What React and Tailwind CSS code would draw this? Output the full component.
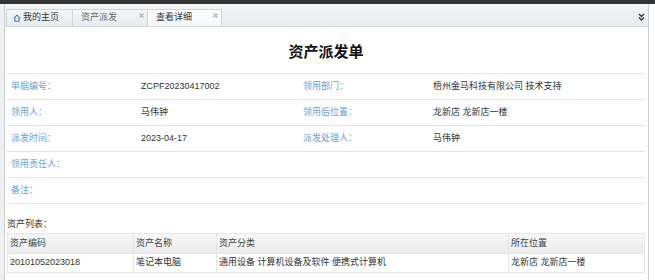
import React from 'react';

const FONT = { fontFamily: '"Liberation Sans", "Noto Sans CJK SC", sans-serif' };

const fields = [
  ['单据编号：', 'ZCPF20230417002', '领用部门：', '梧州金马科技有限公司 技术支持'],
  ['领用人：', '马伟钟', '领用后位置：', '龙新店 龙新店一楼'],
  ['派发时间：', '2023-04-17', '派发处理人：', '马伟钟'],
  ['领用责任人：', '', '', ''],
  ['备注：', '', '', ''],
];

const HomeIcon = () => (
  <svg width="8" height="8" viewBox="0 0 8 8" className="shrink-0">
    <path d="M0.8 4.2 L4 1.2 L7.2 4.2" fill="none" stroke="#3b7fc4" strokeWidth="1.1" />
    <path d="M1.9 3.6 V7.2 H6.1 V3.6" fill="none" stroke="#3b7fc4" strokeWidth="1.1" />
  </svg>
);

const CloseX = () => (
  <svg width="5" height="5" viewBox="0 0 5 5" className="shrink-0">
    <path d="M0.5 0.5 L4.5 4.5 M4.5 0.5 L0.5 4.5" stroke="#a8b4bc" strokeWidth="1.1" />
  </svg>
);

const Tab = ({ label, icon, closable, active }) => (
  <div
    className={`relative flex h-full items-center border-r border-[#cdd6dc] pl-[6px] ${
      active ? 'bg-gradient-to-b from-[#ffffff] to-[#f3f6f8]' : 'bg-gradient-to-b from-[#f4f7f8] to-[#e6ebee]'
    }`}
  >
    {icon}
    <span className={`ml-[2px] text-[9px] ${active || icon ? 'text-[#333]' : 'text-[#666]'}`}>{label}</span>
    {closable && (
      <span className="absolute right-[3px] top-[3px]">
        <CloseX />
      </span>
    )}
  </div>
);

export default function App() {
  return (
    <div className="w-[655px] h-[280px] overflow-hidden bg-white flex flex-col" style={FONT}>
      <div className="h-[4px] bg-[#333] shrink-0" />
      <div className="flex flex-1 min-h-0">
        <div className="w-[5px] bg-[#eef0f2] border-r border-[#c9d1d6]" />
        <div className="flex-1 flex flex-col border-r border-[#c5d0d7]">
          {/* tab bar */}
          <div className="h-[23px] shrink-0 bg-gradient-to-b from-[#f2f5f6] to-[#e7ecee] border-b border-[#d3dbe0] flex items-end pl-[1px] relative">
            <div className="flex h-[17px] border-t border-l border-[#cdd6dc]">
              <div className="w-[66px] h-full">
                <Tab label="我的主页" icon={<HomeIcon />} />
              </div>
              <div className="w-[75px] h-full">
                <Tab label="资产派发" closable />
              </div>
              <div className="w-[74px] h-full">
                <Tab label="查看详细" closable active />
              </div>
            </div>
            <svg width="7" height="8" viewBox="0 0 7 8" className="absolute right-[3px] top-[9px]">
              <path d="M1 1 L3.5 3.5 L6 1 M1 4.5 L3.5 7 L6 4.5" fill="none" stroke="#333" strokeWidth="1.3" />
            </svg>
          </div>

          {/* body */}
          <div className="pl-[2px] pr-[3px] flex flex-col">
            <div className="h-[46px] flex items-center justify-center pt-[5px]">
              <h1 className="text-[15px] font-bold text-[#111]">资产派发单</h1>
            </div>
            <div className="border-t border-[#e3e8eb]">
              {fields.map((r, i) => (
                <div
                  key={i}
                  className="h-[26px] border-b border-[#e3e8eb] grid grid-cols-[130px_162px_130px_1fr] items-center pl-[4px] text-[9px]"
                >
                  <span className="text-[#6aa0d8]">{r[0]}</span>
                  <span className="text-[#333]">{r[1]}</span>
                  <span className="text-[#6aa0d8]">{r[2]}</span>
                  <span className="text-[#333]">{r[3]}</span>
                </div>
              ))}
            </div>
            <div className="h-[29px] flex items-center text-[9px] text-[#333] pt-[12px]">资产列表：</div>
            <div className="border border-[#e6e6e6] text-[9px] text-[#333]">
              <div className="h-[20px] grid grid-cols-[126px_83px_292px_1fr] bg-gradient-to-b from-[#f7f7f7] to-[#ececec] border-b border-[#e6e6e6]">
                <div className="flex items-center pl-[2px] border-r border-[#e6e6e6] text-[#444]">资产编码</div>
                <div className="flex items-center pl-[2px] border-r border-[#e6e6e6] text-[#444]">资产名称</div>
                <div className="flex items-center pl-[2px] border-r border-[#e6e6e6] text-[#444]">资产分类</div>
                <div className="flex items-center pl-[2px] text-[#444]">所在位置</div>
              </div>
              <div className="h-[18px] grid grid-cols-[126px_83px_292px_1fr]">
                <div className="flex items-center pl-[2px] border-r border-[#e6e6e6]">20101052023018</div>
                <div className="flex items-center pl-[2px] border-r border-[#e6e6e6]">笔记本电脑</div>
                <div className="flex items-center pl-[2px] border-r border-[#e6e6e6]">通用设备 计算机设备及软件 便携式计算机</div>
                <div className="flex items-center pl-[2px]">龙新店 龙新店一楼</div>
              </div>
            </div>
          </div>
        </div>
        <div className="w-[6px] bg-white" />
      </div>
    </div>
  );
}
